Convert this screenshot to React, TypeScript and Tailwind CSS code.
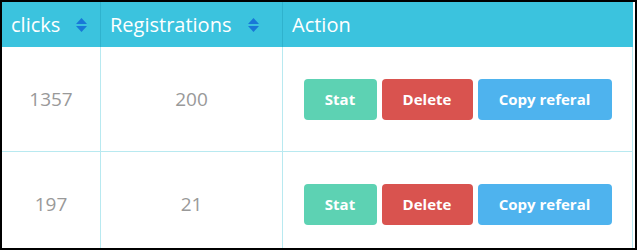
const rows = [
  { clicks: 1357, registrations: 200 },
  { clicks: 197, registrations: 21 },
];

function SortIcon() {
  return (
    <svg width="11" height="14" viewBox="0 0 11 14" className="shrink-0">
      <path d="M5.5 0 L11 6 L0 6 Z" fill="#1878d8" />
      <path d="M0 8 L11 8 L5.5 14 Z" fill="#1878d8" />
    </svg>
  );
}

export default function App() {
  return (
    <div className="w-[637px] h-[250px] border-2 border-black bg-white overflow-hidden font-['Open_Sans',sans-serif]">
      <div className="w-[631px]">
        <div className="flex h-[45px] bg-[#3bc3de] text-white text-[20px]">
          <div className="w-[99px] border-r border-[#2fb2cd] flex items-center justify-between pl-[9px] pr-[13px]">
            <span>clicks</span>
            <SortIcon />
          </div>
          <div className="w-[182px] border-r border-[#2fb2cd] flex items-center justify-between pl-[9px] pr-[23px]">
            <span>Registrations</span>
            <SortIcon />
          </div>
          <div className="flex-1 flex items-center pl-[9px]">Action</div>
        </div>
        {rows.map((row) => (
          <div key={row.clicks} className="flex h-[105px] border-b border-[#b8e9f0] text-[19px] text-[#999999]">
            <div className="w-[99px] border-r border-[#b8e9f0] flex items-center justify-center">{row.clicks}</div>
            <div className="w-[182px] border-r border-[#b8e9f0] flex items-center justify-center">{row.registrations}</div>
            <div className="flex-1 border-r border-[#b8e9f0] flex items-center justify-center gap-[5px] text-white text-[15px] font-bold">
              <button className="w-[73px] h-[41px] rounded-[4px] bg-[#5dd2b3]">Stat</button>
              <button className="w-[91px] h-[41px] rounded-[4px] bg-[#d9534f]">Delete</button>
              <button className="w-[134px] h-[41px] rounded-[4px] bg-[#4eb3ee]">Copy referal</button>
            </div>
          </div>
        ))}
      </div>
    </div>
  );
}
